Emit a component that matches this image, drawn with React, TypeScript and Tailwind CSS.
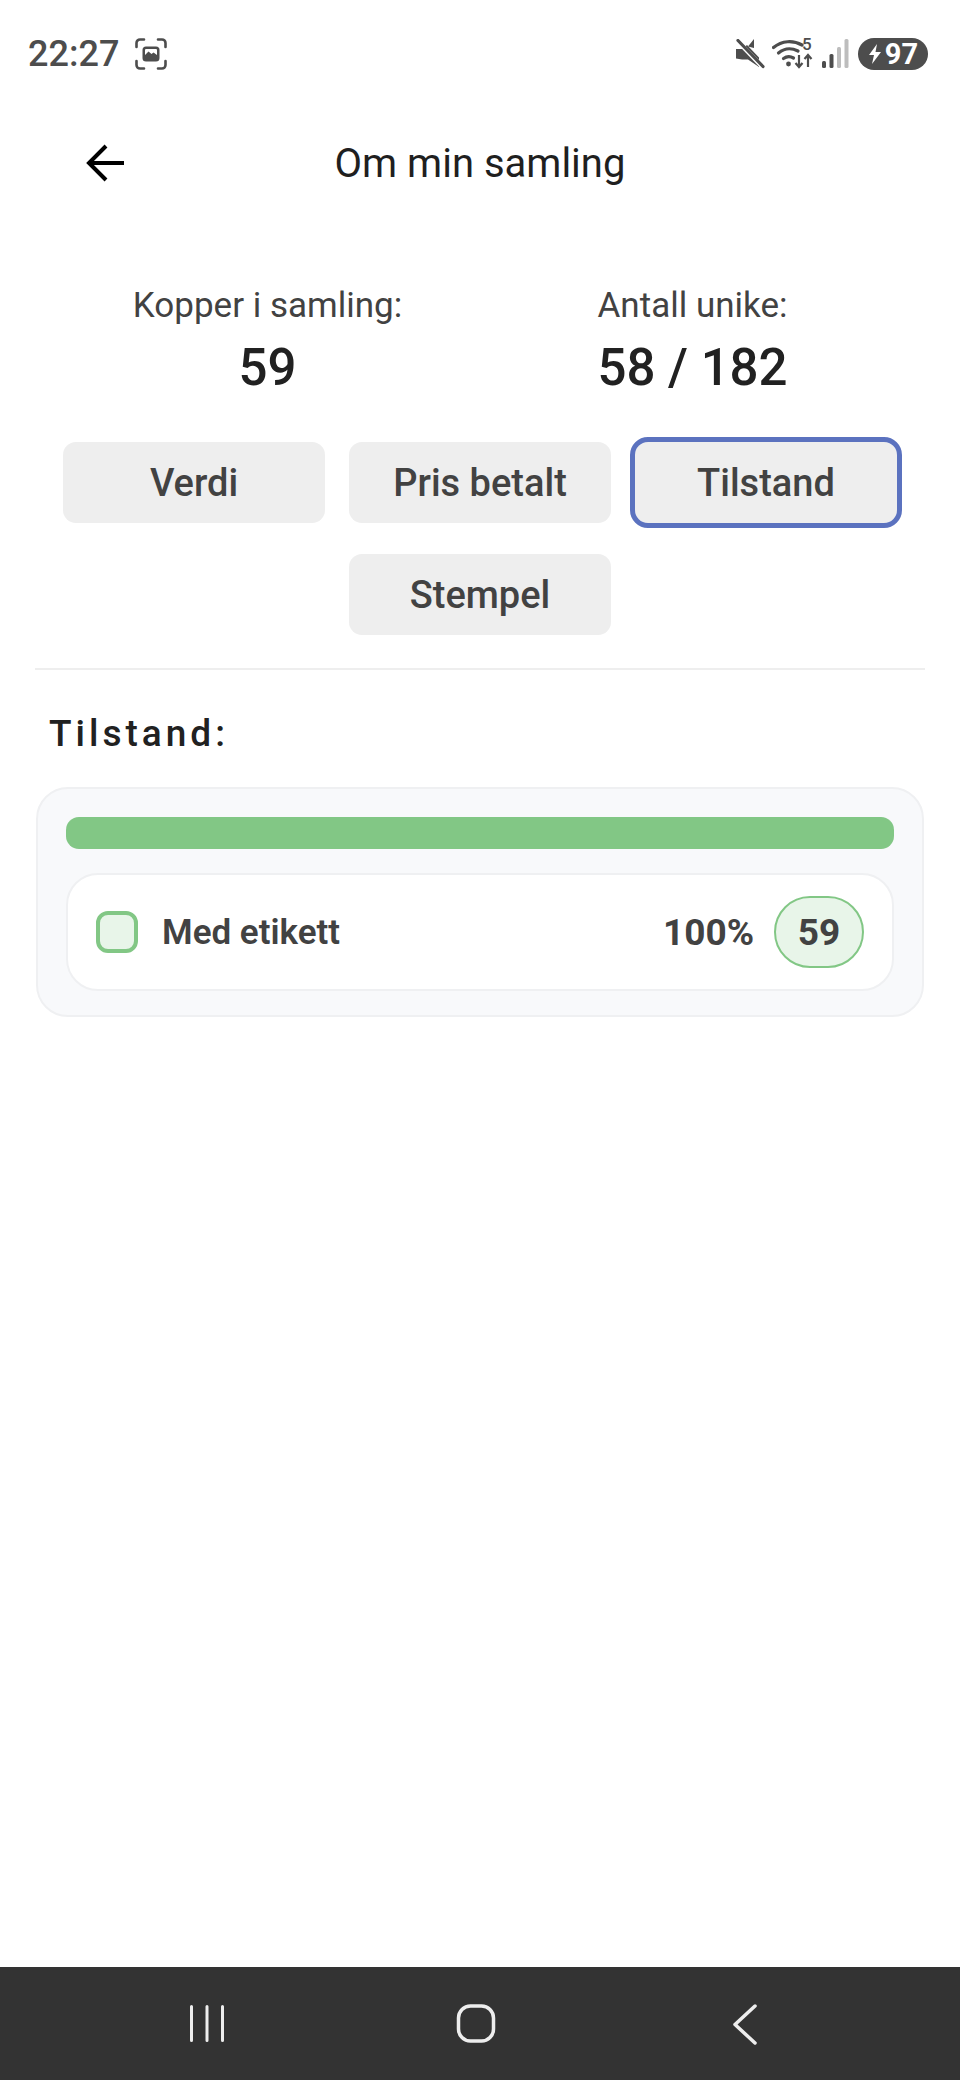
const font = { fontFamily: 'Roboto, sans-serif' };

function Btn({ label, active }: { label: string; active?: boolean }) {
  return (
    <div className={`w-[262px] h-[81px] pt-[2px] flex items-center justify-center rounded-[13px] bg-[#eeeeee] text-[38px] font-medium text-[#424242] ${active ? 'outline-[5px] outline-[#5b72bf]' : ''}`}>
      {label}
    </div>
  );
}

export default function App() {
  return (
    <div style={font} className="w-[960px] h-[2080px] flex flex-col bg-white overflow-hidden" >
      {/* status bar */}
      <div className="h-[108px] shrink-0 flex items-center justify-between pl-[28px] pr-[32px]">
        <div className="flex items-center gap-[16px]">
          <span className="text-[36px] font-medium text-[#4d4d4d] leading-none">22:27</span>
          <svg width="32" height="32" viewBox="0 0 32 32" fill="none">
            <path d="M1.500 9V5a3.500 3.500 0 0 1 3.500-3.500h4M23 1.500h4A3.500 3.500 0 0 1 30.500 5v4M30.500 23v4a3.500 3.500 0 0 1-3.500 3.500h-4M9 30.500H5A3.500 3.500 0 0 1 1.500 27v-4" stroke="#4d4d4d" strokeWidth="2.600" strokeLinecap="round" />
            <rect x="7.500" y="8.500" width="17" height="15" rx="3.500" fill="#4d4d4d" />
            <path d="M10 17l3.500-3.500 3 2.500 2-1.500 3.500 2.500v-5a1 1 0 0 0-1-1H11a1 1 0 0 0-1 1z" fill="#fff" />
          </svg>
        </div>
        <div className="flex items-center">
          <svg width="30" height="30" viewBox="0 0 30 30" className="mr-[7px]">
            <path d="M1 10h6l5-4 12 12.500V28l-11-7.500H7l-6-1z" fill="#4d4d4d" />
            <path d="M19 0v9l-6-1.500z" fill="#4d4d4d" />
            <path d="M3 2.500l25 26" stroke="#fff" strokeWidth="4.500" />
            <path d="M3 1.500l25 26" stroke="#4d4d4d" strokeWidth="3.200" strokeLinecap="round" />
          </svg>
          <div className="relative w-[42px] h-[32px]">
            <svg width="42" height="32" viewBox="0 0 42 32" className="absolute inset-0">
              <path d="M1.500 9.500C10 2.500 21 2 30 7" stroke="#4d4d4d" strokeWidth="3.200" fill="none" strokeLinecap="round" />
              <path d="M6.500 15C12.500 10 20 10 26 13" stroke="#4d4d4d" strokeWidth="3.200" fill="none" strokeLinecap="round" />
              <path d="M11.500 20.500C15 18 18 18 21.500 20" stroke="#4d4d4d" strokeWidth="3.200" fill="none" strokeLinecap="round" />
              <circle cx="16.500" cy="26" r="2.400" fill="#4d4d4d" />
              <path d="M27 17v12M23.500 25l3.500 4 3.500-4M36 29V17M32.500 21l3.500-4 3.500 4" stroke="#4d4d4d" strokeWidth="2.200" fill="none" />
            </svg>
            <span className="absolute left-[30px] top-[-3px] text-[17px] font-medium leading-[18px] text-[#4d4d4d]">5</span>
          </div>
          <svg width="27" height="30" viewBox="0 0 27 30" className="ml-[8px]">
            <rect x="0" y="22" width="4" height="7" rx="1.500" fill="#4d4d4d" />
            <rect x="7.500" y="15" width="4" height="14" rx="1.500" fill="#4d4d4d" />
            <rect x="15" y="8" width="4" height="21" rx="1.500" fill="#bdbdbd" />
            <rect x="22.500" y="0" width="4" height="29" rx="1.500" fill="#bdbdbd" />
          </svg>
          <div className="ml-[9px] w-[70px] h-[32px] rounded-full bg-[#4d4d4d] flex items-center justify-center gap-[3px]">
            <svg width="14" height="20" viewBox="0 0 14 20">
              <path d="M9 0L1 11h5l-2 9 9-12H7.500z" fill="#fff" />
            </svg>
            <span className="text-[29px] font-bold leading-none text-white">97</span>
          </div>
        </div>
      </div>

      {/* header */}
      <div className="relative h-[110px] pt-[2px] shrink-0 flex items-center justify-center">
        <svg width="40" height="38" viewBox="0 0 40 38" className="absolute left-[86px] top-[36px]" fill="none">
          <path d="M38 19H3M20 2L3 19l17 17" stroke="#000" strokeWidth="4" />
        </svg>
        <span className="text-[40px] text-[#1f1f1f]">Om min samling</span>
      </div>

      {/* stats */}
      <div className="grid grid-cols-2 px-[55px] mt-[66px]">
        <div className="flex flex-col items-center">
          <span className="text-[35px] leading-[44px] text-[#424242]">Kopper i samling:</span>
          <span className="text-[51px] leading-[60px] mt-[10px] font-medium text-[#212121]">59</span>
        </div>
        <div className="flex flex-col items-center">
          <span className="text-[35px] leading-[44px] text-[#424242]">Antall unike:</span>
          <span className="text-[51px] leading-[60px] mt-[10px] font-medium text-[#212121]">58 / 182</span>
        </div>
      </div>

      {/* tabs */}
      <div className="flex flex-wrap justify-center gap-x-[24px] gap-y-[31px] mt-[44px]">
        <Btn label="Verdi" />
        <Btn label="Pris betalt" />
        <Btn label="Tilstand" active />
        <Btn label="Stempel" />
      </div>

      <div className="h-[2px] bg-[#eeeeee] mx-[35px] mt-[33px] shrink-0" />

      <div className="ml-[49px] mt-[40px] text-[37px] leading-[48px] font-medium tracking-[4px] text-[#212121]">Tilstand:</div>

      {/* card */}
      <div className="mx-[36px] mt-[29px] h-[230px] rounded-[32px] border-2 border-[#eff0f2] bg-[#f8f9fb] px-[28px] pt-[28px]">
        <div className="h-[32px] w-full rounded-[13px] bg-[#82c785]" />
        <div className="mt-[24px] h-[118px] rounded-[32px] border-2 border-[#eff0f2] bg-white flex items-center pl-[28px] pr-[28px]">
          <div className="w-[42px] h-[42px] rounded-[12px] border-[4px] border-[#82c785] bg-[#e8f5e9]" />
          <span className="ml-[24px] pt-[2px] text-[35px] font-semibold text-[#424242]">Med etikett</span>
          <span className="ml-auto pt-[2px] text-[37px] font-bold text-[#424242]">100%</span>
          <div className="ml-[20px] w-[90px] h-[72px] pt-[2px] rounded-[36px] border-2 border-[#82c785] bg-[#e8f5e9] flex items-center justify-center text-[37px] font-bold text-[#424242]">59</div>
        </div>
      </div>

      {/* nav */}
      <div className="mt-auto h-[113px] shrink-0 bg-[#333333] relative">
        <svg width="960" height="113" viewBox="0 0 960 113" fill="none" className="block">
          <path d="M191.500 39.500v34M207 39.500v34M222.500 39.500v34" stroke="#eeeeee" strokeWidth="3" strokeLinecap="round" />
          <rect x="458.500" y="39" width="35" height="35" rx="12" stroke="#eeeeee" strokeWidth="3.500" />
          <path d="M755 39L735 57.500 755 76" stroke="#eeeeee" strokeWidth="3.500" strokeLinecap="round" strokeLinejoin="round" />
        </svg>
      </div>
    </div>
  );
}
